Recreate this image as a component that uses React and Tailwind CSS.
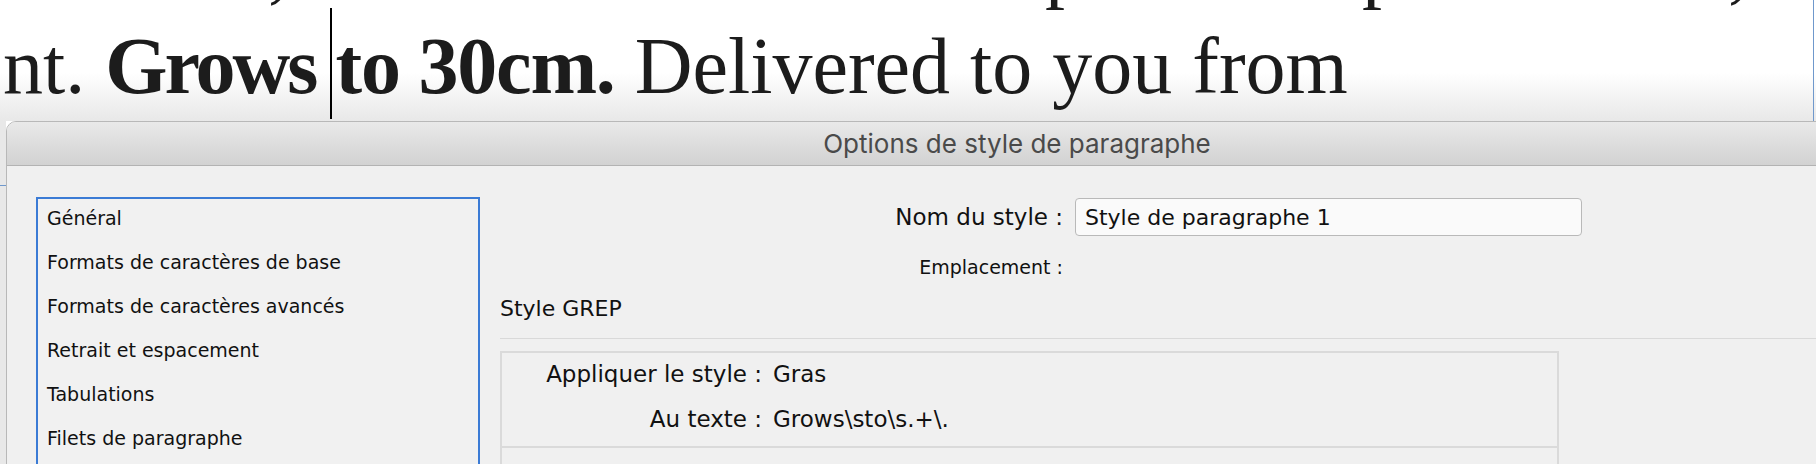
const sections = [
  "Général",
  "Formats de caractères de base",
  "Formats de caractères avancés",
  "Retrait et espacement",
  "Tabulations",
  "Filets de paragraphe",
  "Encadré de paragraphe",
  "Trame de paragraphe",
];

function DocumentBehind() {
  return (
    <div className="flex h-[121px] overflow-hidden bg-gradient-to-b from-white from-60% to-[#e8e8e8]">
      <div className="-mt-[84px] flex-1 whitespace-nowrap pl-[3px] font-['Liberation_Serif',serif] text-[80px] leading-[100px] text-[#1c1c1c]">
        {/* tail of the previous line, only descenders show */}
        <div className="flex h-[100px]">
          <span className="ml-[265px]">,</span>
          <span className="ml-[757px]">p</span>
          <span className="ml-[277px]">p</span>
          <span className="ml-[326px]">,</span>
        </div>
        <div className="h-[100px]">
          nt.{" "}
          <b>
            <span className="tracking-[-3px]">Grows</span>
            <span className="tracking-[-5px]"> </span>
            <span className="-mt-[40px] mr-[3px] inline-block h-[111px] w-[2px] bg-black align-[-26px]" />
            <span className="tracking-[-1.2px]">to 30cm.</span>
          </b>{" "}
          Delivered to you from
        </div>
      </div>
      <div className="mr-[2px] w-px bg-[#6f98cc]" />
    </div>
  );
}

function GrepRow({ label, value, className = "" }) {
  return (
    <div className={"flex text-[23px] leading-[30px] " + className}>
      <span className="w-[260px] text-right">{label}</span>
      <span className="ml-[11px]">{value}</span>
    </div>
  );
}

export default function App() {
  return (
    <div className="h-[464px] w-[1816px] overflow-hidden bg-white">
      <DocumentBehind />

      <div className="flex">
        <div className="w-[6px] shrink-0 bg-[#e8e8e8]">
          <div className="mt-[64px] h-px bg-[#6f98cc]" />
        </div>

        {/* dialog */}
        <div className="h-[400px] w-[2022px] shrink-0 overflow-hidden rounded-t-[10px] border border-[#b8b8b8] bg-[#f0f0f0]">
          <div className="flex h-[44px] items-center justify-center border-b border-[#b3b3b3] bg-gradient-to-b from-[#e9e9e9] to-[#d2d2d2] font-['Inter',sans-serif] text-[26px] text-[#4a4a4a]">
            Options de style de paragraphe
          </div>

          <div className="flex items-start font-['DejaVu_Sans',sans-serif] text-[#111]">
            <div className="ml-[29px] mt-[31px] h-[300px] w-[444px] shrink-0 overflow-hidden border-2 border-[#3b7bd5] bg-[#f1f1f1]">
              <div className="-mt-[3px]">
                {sections.map((s) => (
                  <div key={s} className="flex h-[44px] items-center pl-[9px] text-[19px]">
                    {s}
                  </div>
                ))}
              </div>
            </div>

            <div className="ml-[20px] mt-[32px] flex flex-1 flex-col">
              <div className="flex items-center">
                <span className="w-[563px] text-right text-[23px]">Nom du style :</span>
                <div className="ml-[12px] flex h-[38px] w-[507px] items-center rounded-[4px] border border-[#b9b9b9] bg-[#fafafa] px-[9px] text-[22px]">
                  Style de paragraphe 1
                </div>
              </div>

              <div className="mt-[16px] flex h-[30px] items-center">
                <span className="w-[563px] text-right text-[19px]">Emplacement :</span>
              </div>

              <div className="mt-[13px] text-[22px] leading-[28px]">Style GREP</div>
              <div className="mt-[15px] h-px bg-[#d9d9d9]" />

              <div className="mt-[12px] h-[200px] w-[1059px] border-2 border-[#dadada] pt-[6px]">
                <GrepRow label="Appliquer le style :" value="Gras" />
                <GrepRow label="Au texte :" value="Grows\sto\s.+\." className="mt-[15px]" />
                <div className="mt-[12px] h-[2px] bg-[#dadada]" />
              </div>
            </div>
          </div>
        </div>
      </div>
    </div>
  );
}
